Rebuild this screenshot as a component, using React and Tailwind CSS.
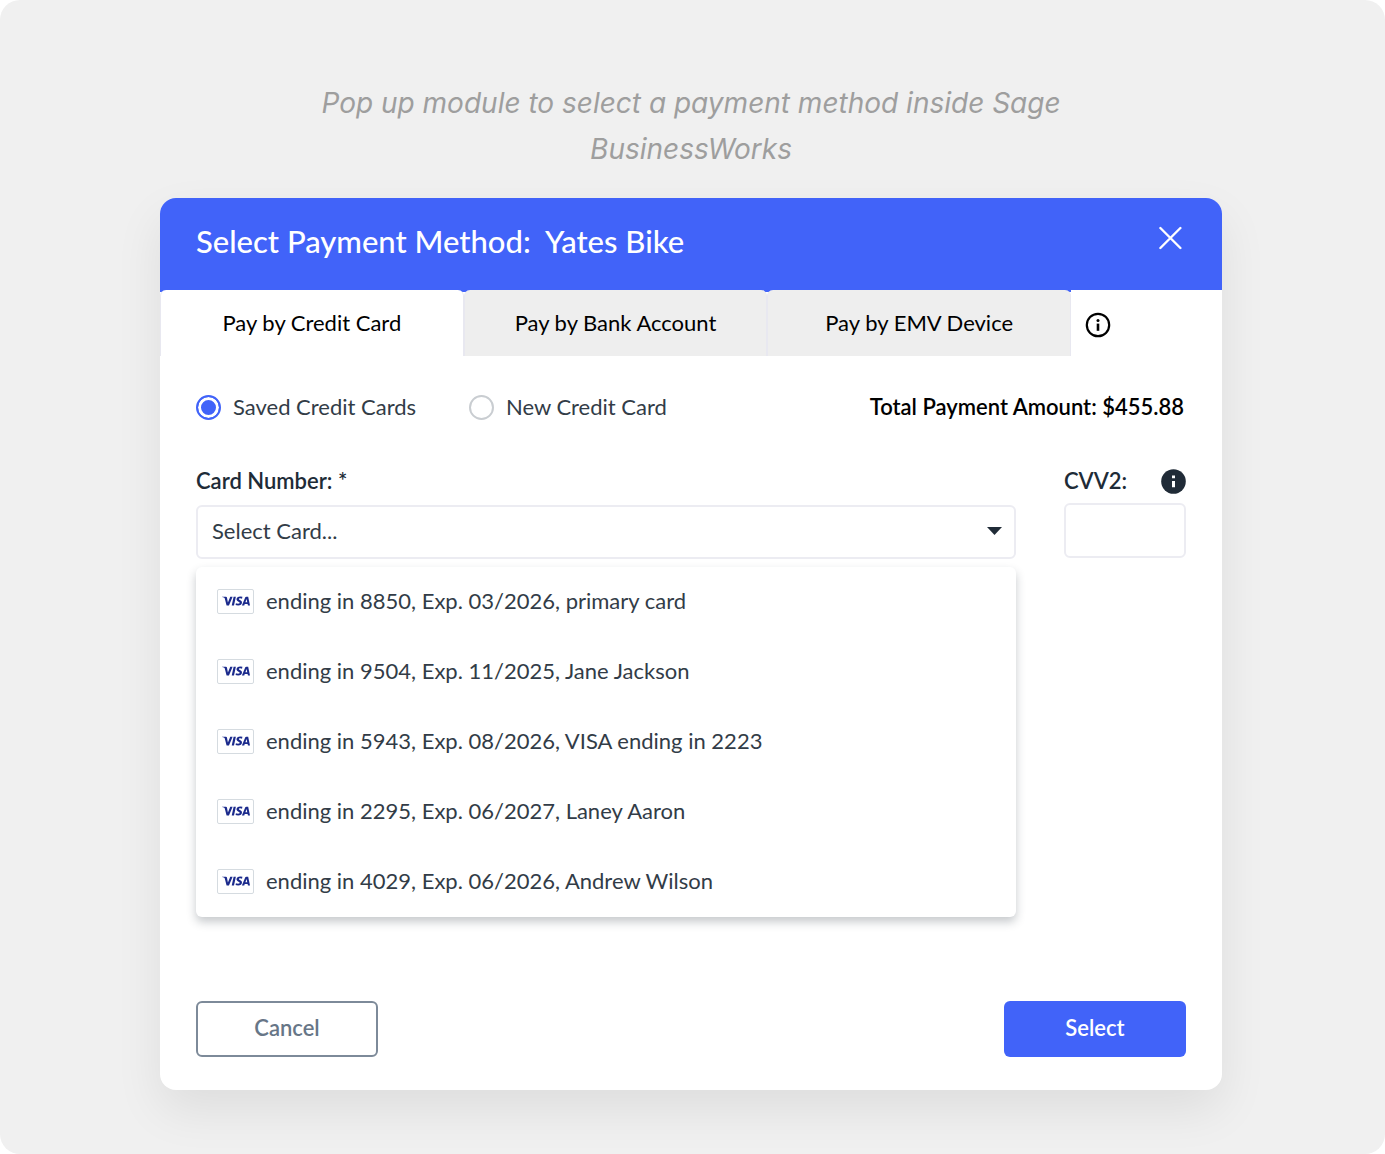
import { useState } from "react";
import { SiVisa } from "react-icons/si";

const tabs = ["Pay by Credit Card", "Pay by Bank Account", "Pay by EMV Device"];

const cards = [
  "ending in 8850, Exp. 03/2026, primary card",
  "ending in 9504, Exp. 11/2025, Jane Jackson",
  "ending in 5943, Exp. 08/2026, VISA ending in 2223",
  "ending in 2295, Exp. 06/2027, Laney Aaron",
  "ending in 4029, Exp. 06/2026, Andrew Wilson",
];

const CloseIcon = () => (
  <svg width="24" height="24" viewBox="0 0 24 24" fill="none" stroke="currentColor" strokeWidth="2.4" strokeLinecap="round">
    <path d="M2.4 2l20 20M22.4 2L2.4 22" />
  </svg>
);

const InfoOutline = () => (
  <svg width="26" height="26" viewBox="0 0 26 26" fill="none">
    <circle cx="13" cy="13" r="11.2" stroke="#000" strokeWidth="2.2" />
    <path d="M11.7 11.6h2.6v7.2h-2.6z" fill="#000" />
    <circle cx="13" cy="8.4" r="1.5" fill="#000" />
  </svg>
);

const InfoSolid = () => (
  <svg width="25" height="25" viewBox="0 0 25 25">
    <circle cx="12.5" cy="12.5" r="12.3" fill="#202b37" />
    <path d="M11 6.4h3v2.8h-3zM11 12h3v6.2h-3z" fill="#fff" />
  </svg>
);

const TypeOption = ({ label, value, selected, onSelect }) => (
  <label className="flex items-center gap-3 text-[22px] leading-7 text-[#323c47]">
    <input
      type="radio"
      name="card-type"
      value={value}
      checked={selected}
      onChange={() => onSelect(value)}
      className="size-[25px] appearance-none rounded-full border-2 border-[#c9cdd1] bg-white checked:border-[#4163f9] checked:bg-[#4163f9] checked:shadow-[inset_0_0_0_3px_#fff]"
    />
    {label}
  </label>
);

const App = () => {
  const [tab, setTab] = useState(tabs[0]);
  const [type, setType] = useState("saved");
  const [card, setCard] = useState("");

  return (
    <div className="bg-white">
      <main className="min-h-screen rounded-[20px] bg-[#f0f0f0] pt-20 pr-[163px] pb-16 pl-[160px] font-['Lato','Liberation_Sans',sans-serif]">
        <p className="mx-auto max-w-[800px] text-center font-['Inter',sans-serif] text-[28px] leading-[46px] text-[#9e9e9e] italic">
          Pop up module to select a payment method inside Sage BusinessWorks
        </p>

        <div className="mt-[26px] rounded-2xl bg-white shadow-[0_20px_48px_rgba(0,0,0,0.08)]">
          {/* Header */}
          <div className="flex h-[92px] items-start justify-between rounded-t-2xl bg-[#4163f9] pr-10 pl-9 text-white">
            <h1 className="pt-[23px] text-[31px] leading-10 font-medium whitespace-pre">
              {"Select Payment Method:  Yates Bike"}
            </h1>
            <button type="button" aria-label="Close" className="pt-7">
              <CloseIcon />
            </button>
          </div>

          {/* Tabs */}
          <div className="flex items-center">
            <div role="tablist" className="flex w-[911px] bg-[linear-gradient(#4163f9_2px,#fff_2px)]">
              {tabs.map(t => (
                <button
                  key={t}
                  type="button"
                  role="tab"
                  aria-selected={tab === t}
                  onClick={() => setTab(t)}
                  className={`h-[66px] flex-1 rounded-t-md border-x border-[#e8e8f0] text-[22px] leading-7 text-black ${
                    tab === t ? "bg-white" : "bg-[#eeeeee]"
                  }`}
                >
                  {t}
                </button>
              ))}
            </div>
            <button type="button" aria-label="Payment information" className="ml-[14px] pt-[3px]">
              <InfoOutline />
            </button>
          </div>

          <div className="px-9 pb-[33px]">
            {/* Card type */}
            <div className="flex items-center pt-[37px]">
              <div className="w-[273px]">
                <TypeOption label="Saved Credit Cards" value="saved" selected={type === "saved"} onSelect={setType} />
              </div>
              <TypeOption label="New Credit Card" value="new" selected={type === "new"} onSelect={setType} />
              <p className="ml-auto pr-0.5 text-[22px] leading-7 font-semibold text-black">
                Total Payment Amount: $455.88
              </p>
            </div>

            {/* Card fields */}
            <div className="mt-[46px] flex items-start justify-between gap-12">
              <div className="flex-1">
                <label htmlFor="card" className="block text-[22px] leading-7 font-semibold text-[#202b37]">
                  Card Number: *
                </label>
                <div className="relative mt-[10px]">
                  <select
                    id="card"
                    value={card}
                    onChange={e => setCard(e.target.value)}
                    className="h-[54px] w-full appearance-none rounded-md border-2 border-[#ececf2] bg-white pb-1 pl-[14px] text-[22px] text-[#323c47]"
                  >
                    <option value="">Select Card...</option>
                    {cards.map(c => (
                      <option key={c}>{c}</option>
                    ))}
                  </select>
                  <svg className="pointer-events-none absolute top-[22px] right-[14px]" width="15" height="8" viewBox="0 0 15 8">
                    <path d="M0 0h15L7.5 8z" fill="#202b37" />
                  </svg>
                </div>

                <ul className="mt-2 rounded-md bg-white shadow-[0_5px_10px_rgba(32,43,55,0.25)]">
                  {cards.map(c => (
                    <li key={c}>
                      <button
                        type="button"
                        onClick={() => setCard(c)}
                        className="flex h-[70px] w-full items-center gap-3 pb-0.5 pl-[21px] text-left text-[22px] leading-7 text-[#323c47]"
                      >
                        <span className="flex h-[25px] w-[37px] items-center justify-center rounded-xs border border-[#d5dbe0] bg-white text-[#1b2a8c]">
                          <SiVisa size={28} />
                        </span>
                        {c}
                      </button>
                    </li>
                  ))}
                </ul>
              </div>

              <div className="w-[122px]">
                <div className="flex items-center justify-between">
                  <label htmlFor="cvv" className="text-[22px] leading-7 font-semibold text-[#202b37]">
                    CVV2:
                  </label>
                  <button type="button" aria-label="About CVV2">
                    <InfoSolid />
                  </button>
                </div>
                <input
                  id="cvv"
                  type="text"
                  className="mt-2 h-[55px] w-full rounded-md border-2 border-[#ececf2] bg-white px-3 text-[22px]"
                />
              </div>
            </div>

            {/* Actions */}
            <div className="mt-[84px] flex justify-between">
              <button
                type="button"
                className="h-14 w-[182px] rounded-md border-2 border-[#7d8a99] bg-white pb-0.5 text-[22px] leading-7 font-semibold text-[#677687]"
              >
                Cancel
              </button>
              <button
                type="button"
                className="h-14 w-[182px] rounded-md bg-[#4163f9] pb-0.5 text-[22px] leading-7 font-semibold text-white"
              >
                Select
              </button>
            </div>
          </div>
        </div>
      </main>
    </div>
  );
};

export default App;
